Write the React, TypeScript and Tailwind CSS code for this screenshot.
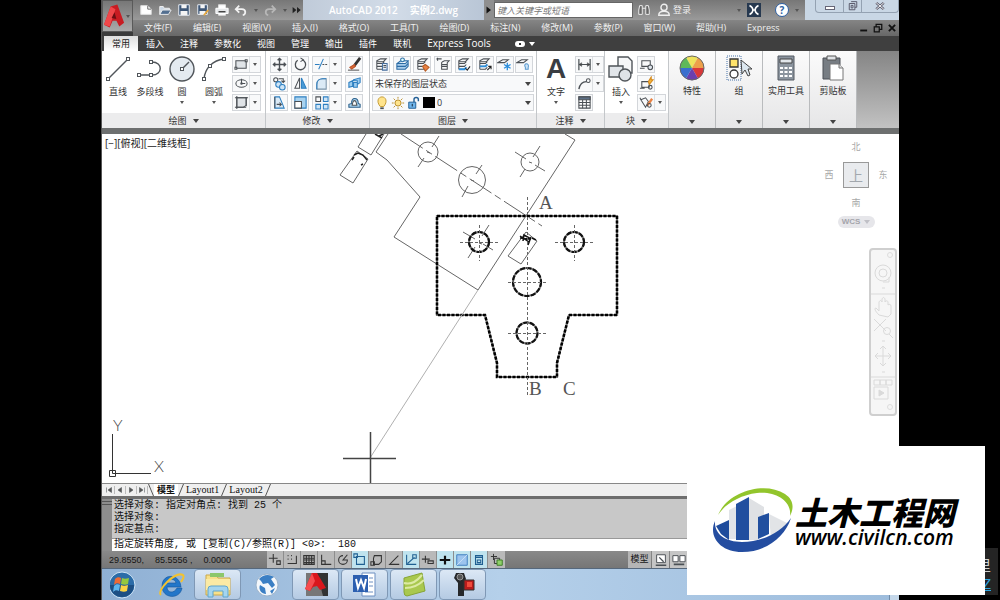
import type { ReactNode } from 'react'

const menus = ['文件(F)', '编辑(E)', '视图(V)', '插入(I)', '格式(O)', '工具(T)', '绘图(D)', '标注(N)', '修改(M)', '参数(P)', '窗口(W)', '帮助(H)', 'Express']
const ribbonTabs = ['常用', '插入', '注释', '参数化', '视图', '管理', '输出', '插件', '联机', 'Express Tools']

function Icon({ children, className = 'size-[15px]' }: { children: ReactNode; className?: string }) {
  return (
    <svg viewBox="0 0 16 16" className={`${className} shrink-0`} fill="none" stroke="#4b5055" strokeWidth="1.1" aria-hidden="true">
      {children}
    </svg>
  )
}

function Caret({ className = 'text-[#444]' }: { className?: string }) {
  return (
    <svg viewBox="0 0 6 4" className={`h-1 w-1.5 shrink-0 ${className}`} aria-hidden="true">
      <path d="M0 0h6L3 4z" fill="currentColor" />
    </svg>
  )
}

function SmallCaret() {
  return (
    <svg viewBox="0 0 4 3" className="h-[3px] w-1 shrink-0" aria-hidden="true">
      <path d="M0 0h4L2 3z" fill="#555" />
    </svg>
  )
}

function SmallButton({ label, arrow, children }: { label: string; arrow?: boolean; children: ReactNode }) {
  return (
    <button aria-label={label} className="flex h-[17px] shrink-0 items-center border border-[#d3d6da] bg-[#f8f9fa]">
      <span className="flex w-4 justify-center">
        <Icon>{children}</Icon>
      </span>
      {arrow && (
        <span className="flex h-full w-[11px] items-center justify-center border-l border-[#dcdfe2]">
          <SmallCaret />
        </span>
      )}
    </button>
  )
}

function BigButton({ label, arrow, children }: { label: string; arrow?: boolean; children: ReactNode }) {
  return (
    <button className="flex w-8 shrink-0 flex-col items-center">
      <svg viewBox="0 0 28 28" className="size-7" fill="none" stroke="#50555a" strokeWidth="1.4" aria-hidden="true">
        {children}
      </svg>
      <span className="mt-[3px] whitespace-nowrap leading-3">{label}</span>
      <span className="mt-[3px]">{arrow && <SmallCaret />}</span>
    </button>
  )
}

function Panel({ title, className, children }: { title: string; className: string; children: ReactNode }) {
  return (
    <section aria-label={title} className={`flex shrink-0 flex-col border-r border-[#c4c7ca] bg-white ${className}`}>
      <div className="flex h-[62px] items-start pt-1">{children}</div>
      <button className="flex h-[15px] items-center justify-center gap-1.5 bg-[#ececed]">
        {title}
        <Caret />
      </button>
    </section>
  )
}

function TallPanel({ title, children }: { title: string; children: ReactNode }) {
  return (
    <button className="flex w-[47px] shrink-0 flex-col items-center border-r border-[#b9bbbd] bg-linear-to-b from-[#fbfbfb] to-[#e6e6e7] pt-[3px]">
      <svg viewBox="0 0 28 28" className="size-7" aria-hidden="true">
        {children}
      </svg>
      <span className="mt-[3px] whitespace-nowrap leading-3">{title}</span>
      <span className="mt-auto pb-1">
        <Caret />
      </span>
    </button>
  )
}

const grip = (x: number, y: number) => <rect x={x - 1.5} y={y - 1.5} width="3" height="3" fill="#fff" strokeWidth="1" />

function DrawPanel() {
  return (
    <Panel title="绘图" className="w-[164px]">
      <BigButton label="直线">
        <path d="M4 24 24 4" />
        {grip(4, 24)}
        {grip(24, 4)}
      </BigButton>
      <BigButton label="多段线">
        <path d="M3 20h13c11 0 11-13 0-13" />
        {grip(3, 20)}
        {grip(15, 20)}
        {grip(15, 7)}
      </BigButton>
      <BigButton label="圆" arrow>
        <circle cx="14" cy="14" r="12" fill="#e4eaf0" />
        <path d="m14 14 7-7" />
        {grip(14, 14)}
      </BigButton>
      <BigButton label="圆弧" arrow>
        <path d="M4 24C5 13 13 5 24 4" />
        {grip(4, 24)}
        {grip(10, 11)}
        {grip(24, 4)}
      </BigButton>
      <div className="ml-0.5 flex flex-col gap-0.5 pt-px">
        <SmallButton label="矩形" arrow>
          <path d="M2 4h11v8H2z" fill="#dfe3e7" />
          <path d="M1 11h2v2H1zM12 3h2v2h-2z" fill="#fff" />
        </SmallButton>
        <SmallButton label="椭圆" arrow>
          <ellipse cx="8" cy="8" rx="6" ry="4" />
          <path d="M8 3v5h4" />
          <circle cx="8" cy="8" r=".8" />
        </SmallButton>
        <SmallButton label="图案填充" arrow>
          <path d="M3 3h10v8l-3 2H3z" fill="#dfe3e7" />
          <path d="M1 3h14M1 13h12M3 1v14M13 2v10" />
        </SmallButton>
      </div>
    </Panel>
  )
}

function ModifyPanel() {
  return (
    <Panel title="修改" className="w-[104px]">
      <div className="grid grid-cols-[18px_18px_30px_18px] gap-x-[3px] gap-y-0.5 pl-1 pt-px">
        <SmallButton label="移动">
          <path d="M8 2v12M2 8h12M6 3.500 8 1.500l2 2M6 12.500l2 2 2-2M3.500 6 1.500 8l2 2M12.500 6l2 2-2 2" strokeWidth="1.5" />
        </SmallButton>
        <SmallButton label="旋转">
          <path d="M5 3.500a5.500 5.500 0 1 0 5-.5" strokeWidth="1.4" />
          <path d="m8 1 3 2-3 2" />
        </SmallButton>
        <SmallButton label="修剪" arrow>
          <path d="M1 8h5" stroke="#2d7fc1" />
          <path d="M9 8h6" strokeDasharray="2 1" />
          <path d="m5 13 5-11" stroke="#2d7fc1" />
        </SmallButton>
        <SmallButton label="删除">
          <path d="m14 1-6 8" stroke="#333" strokeWidth="3" />
          <path d="m8 8-5 3 2 2 4-3z" fill="#e06b35" stroke="#b8532a" />
          <path d="M1 14h12" stroke="#555" />
        </SmallButton>
        <SmallButton label="复制">
          <circle cx="4" cy="4" r="2.200" />
          <path d="M7 3h5v3M10 5l2 2 2-2" />
          <circle cx="7" cy="9" r="3" fill="#cfe5f6" stroke="#2d7fc1" />
          <circle cx="11" cy="12" r="3" fill="#cfe5f6" stroke="#2d7fc1" />
        </SmallButton>
        <SmallButton label="镜像">
          <path d="M7 2v11H2z" />
          <path d="M9 2v11h5z" fill="#4a9bd6" stroke="#2d7fc1" />
        </SmallButton>
        <SmallButton label="圆角" arrow>
          <path d="M3 14V9c0-4 3-6 6-6h4v11z" fill="#dbeaf6" stroke="#7a93a8" />
          <path d="M3 14V9c0-4 3-6 6-6h4" stroke="#2d7fc1" />
        </SmallButton>
        <SmallButton label="分解">
          <path d="m2 7 4-2v6l-4 1zM7 4l7-2v5l-3 2V5H7zM7 7h4v5H7z" fill="#9bcbee" stroke="#2d7fc1" />
        </SmallButton>
        <SmallButton label="拉伸">
          <path d="M3 2h5l5 12H3z" fill="#dbeaf6" stroke="#2d7fc1" />
          <path d="M3 2v12M5 10h5M8 8l2 2-2 2" />
        </SmallButton>
        <SmallButton label="缩放">
          <path d="M2 2h12v12H2z" fill="#a8d2ef" stroke="#2d7fc1" />
          <path d="M2 7h7v7H2z" fill="#fff" />
        </SmallButton>
        <SmallButton label="阵列" arrow>
          <path d="M2 2h5v5H2z" />
          <path d="M10 2h5v5h-5zM10 10h5v5h-5zM2 10h5v5H2z" fill="#cfe5f6" stroke="#2d7fc1" />
        </SmallButton>
        <SmallButton label="偏移">
          <path d="M2 13v-3l3-1c-1-7 7-7 7 0l2 1v3z" fill="#a8d2ef" stroke="#2b5f8a" />
          <path d="M5 11h6c-2-1 0-5-3-5s-1 4-3 5z" fill="#fff" />
        </SmallButton>
      </div>
    </Panel>
  )
}

const sheets = <path d="m3 4 4-2h6l-3 3H3zm0 3h6l2-2M3 10h6l2-2M3 13h6l2-2M3 4v9" />

function LayerPanel() {
  return (
    <Panel title="图层" className="w-[167px]">
      <div className="flex w-full flex-col gap-0.5 px-0.5 pt-px">
        <div className="flex justify-between pr-px">
          <div className="flex gap-[3px]">
            <SmallButton label="图层特性">
              {sheets}
              <path d="M9 7h5v7H9z" fill="#e6eff8" stroke="#466e9d" />
              <path d="M10 9h3M10 11h3" />
            </SmallButton>
            <SmallButton label="将对象的图层设为当前">
              <path d="m2 7 4-3h8l-3 3H2v6h9l3-3V4" fill="#a8cdec" stroke="#2c6ca5" />
              <path d="M2 10h9l3-3" stroke="#2c6ca5" />
              <circle cx="8" cy="3" r="2" fill="#dff" stroke="#2c6ca5" />
            </SmallButton>
          </div>
          <div className="flex gap-[3px]">
            <SmallButton label="匹配">
              {sheets}
              <path d="m8 10 3-2 4 3-4 4z" fill="#e98243" stroke="#b65d26" />
            </SmallButton>
            <SmallButton label="上一个">
              <path d="m7 5 2-1h5l-2 2v7H6V6zM6 8h6M6 10h6M1 2h5M2 1 1 2l1 2" />
            </SmallButton>
          </div>
          <div className="flex gap-[3px]">
            <SmallButton label="隔离">
              {sheets}
              <path d="M3 13h6l2-2" stroke="#2d8fdc" strokeWidth="2" />
              <path d="m10 12 2 2 3-4" stroke="#222" />
            </SmallButton>
            <SmallButton label="取消隔离">
              {sheets}
              <path d="M3 10h6l2-2" stroke="#2d8fdc" strokeWidth="2" />
              <path d="m11 14 4-4M12 10h3v3" stroke="#222" />
            </SmallButton>
          </div>
          <div className="flex gap-px">
            <SmallButton label="冻结">
              <path d="M1 6h7l4-3H6z" />
              <path d="M11 6v8M7.500 8l7 4M14.500 8l-7 4" stroke="#2d8fdc" strokeWidth="1.4" />
            </SmallButton>
            <SmallButton label="关闭">
              <path d="M1 6h7l4-3H6z" />
              <path d="M10 13v-2c-3-5 5-5 3 0v2z" fill="#cde3f5" stroke="#5b9bd0" />
            </SmallButton>
          </div>
        </div>
        <div className="relative h-[17px] border border-[#d3d6da] bg-[#f8f9fa]">
          <select aria-label="图层状态" className="h-full w-full appearance-none bg-transparent pl-0.5 leading-[15px] outline-none">
            <option>未保存的图层状态</option>
          </select>
          <span className="pointer-events-none absolute top-1.5 right-0.5 flex">
            <Caret />
          </span>
        </div>
        <div className="relative flex h-[17px] items-center gap-0.5 border border-[#d3d6da] bg-[#f8f9fa] pl-0.5">
          <Icon className="size-3.5">
            <path d="M6 12C1 6 4 1 8 1s7 5 2 11z" fill="#ffe48c" stroke="#c49a33" />
            <path d="M6 14h4" strokeWidth="2" />
          </Icon>
          <Icon className="size-3.5">
            <circle cx="8" cy="8" r="3.500" fill="#ffe48c" stroke="#b88b25" />
            <path d="M8 1v2M8 13v2M1 8h2M13 8h2M3 3l1.500 1.500M11.500 11.500 13 13M13 3l-1.500 1.500M4.500 11.500 3 13" stroke="#b88b25" />
          </Icon>
          <Icon className="size-3.5">
            <path d="M2 7h8v7H2z" fill="#6fb4ea" stroke="#225f96" />
            <path d="M8 7V4c0-3 5-3 5 0v2" stroke="#225f96" strokeWidth="1.6" />
            <path d="M6 9v3" stroke="#123" />
          </Icon>
          <span className="h-[11px] w-3 bg-black" />
          <select aria-label="图层" className="h-full flex-1 appearance-none bg-transparent leading-[15px] outline-none">
            <option>0</option>
          </select>
          <span className="pointer-events-none absolute top-1.5 right-0.5 flex">
            <Caret />
          </span>
        </div>
      </div>
    </Panel>
  )
}

function NotePanel() {
  return (
    <Panel title="注释" className="w-[68px]">
      <button className="flex w-[38px] shrink-0 flex-col items-center">
        <span className="font-['Liberation_Sans',sans-serif] text-[28px] leading-7 font-bold text-[#3a3d42]">A</span>
        <span className="mt-[3px] leading-3">文字</span>
        <span className="mt-[3px]">
          <SmallCaret />
        </span>
      </button>
      <div className="flex flex-col items-start gap-0.5 pt-px">
        <SmallButton label="线性标注" arrow>
          <path d="M2 2v12M14 2v12M2 8h12" strokeWidth="1.3" />
          <path d="m5 6-3 2 3 2zM11 6l3 2-3 2z" fill="#444" strokeWidth=".5" />
        </SmallButton>
        <SmallButton label="引线" arrow>
          <path d="M2 14C3 9 5 6 10 6" strokeWidth="1.5" />
          <circle cx="12" cy="5" r="2" />
        </SmallButton>
        <SmallButton label="表格">
          <path d="M2 2h12v12H2z" fill="#fff" />
          <path d="M2 2h12v3H2z" fill="#5c6f86" />
          <path d="M2 8h12M2 11h12M6 5v9M10 5v9" />
        </SmallButton>
      </div>
    </Panel>
  )
}

function BlockPanel() {
  return (
    <Panel title="块" className="w-[64px]">
      <BigButton label="插入" arrow>
        <path d="M11 2h10l4 4v12H11z" fill="#f6f7f8" />
        <path d="M2 11h14v11H2z" fill="#e2e6ea" />
        <circle cx="18" cy="20" r="6" fill="#dfe3e8" />
      </BigButton>
      <div className="flex flex-col items-start gap-0.5 pt-px">
        <SmallButton label="创建">
          <path d="M3 4h9v6H3zM1 12h5" />
          <circle cx="12" cy="11" r="2.500" fill="#dfe6ed" />
        </SmallButton>
        <SmallButton label="编辑块">
          <path d="M3 6h8v6H3zM1 13h5" />
          <circle cx="12" cy="12" r="2" />
          <path d="m10 6 3-5v3h2l-4 5z" fill="#f6b73c" stroke="#d58a1d" />
        </SmallButton>
        <SmallButton label="编辑属性" arrow>
          <path d="m2 5 5-2 3 4-3 6zM2 5 1 3" />
          <path d="m9 11 5-7" stroke="#e98243" strokeWidth="2.500" />
          <circle cx="11" cy="11" r="2" />
        </SmallButton>
      </div>
    </Panel>
  )
}

function UtilityPanels() {
  return (
    <>
      <TallPanel title="特性">
        <circle cx="14" cy="14" r="12" fill="#ddd" />
        <path d="M14 14 8 3.600a12 12 0 0 1 12 0z" fill="#eee35c" />
        <path d="M14 14 20 3.600A12 12 0 0 1 26 14z" fill="#eda04a" />
        <path d="M14 14h12a12 12 0 0 1-6 10.400z" fill="#d8383a" />
        <path d="m14 14 6 10.400a12 12 0 0 1-12 0z" fill="#6a3fae" />
        <path d="M14 14 8 24.400A12 12 0 0 1 2 14z" fill="#3a6fce" />
        <path d="M14 14H2A12 12 0 0 1 8 3.600z" fill="#5fb85a" />
        <circle cx="14" cy="14" r="12" fill="none" stroke="#666" />
      </TallPanel>
      <TallPanel title="组">
        <path d="M2 2h14v24H2z" fill="none" stroke="#4673a8" strokeDasharray="1 1" />
        <path d="M5 5h8v8H5z" fill="#ffe36a" stroke="#333" strokeWidth="1.300" />
        <circle cx="9" cy="20" r="4" fill="#fff" stroke="#333" strokeWidth="1.300" />
        <path d="m16 6 1 14 3-4 3 6 2-1-2-6h4z" fill="#dce7ef" stroke="#444" />
      </TallPanel>
      <TallPanel title="实用工具">
        <path d="M6 2h16v24H6z" fill="#8b949e" stroke="#555b62" />
        <path d="M8 5h12v4H8z" fill="#e2e7eb" stroke="#444" />
        <path d="M8 13h3v2H8zm4.500 0h3v2h-3zm4.500 0h3v2h-3zM8 17h3v2H8zm4.500 0h3v2h-3zm4.500 0h3v2h-3zM8 21h3v2H8zm4.500 0h3v2h-3zm4.500 0h3v2h-3z" fill="#fff" />
      </TallPanel>
      <TallPanel title="剪贴板">
        <path d="M4 4h17v21H4z" fill="#777d83" stroke="#4c5157" />
        <path d="M8 2h9v4H8z" fill="#dfe2e5" stroke="#555" />
        <path d="M11 10h9l4 4v12H11z" fill="#fff" stroke="#777" />
        <path d="M20 10v4h4" fill="#ddd" stroke="#777" />
      </TallPanel>
    </>
  )
}

function TitleBar() {
  return (
    <div className="flex h-5 items-center bg-linear-to-b from-[#777] to-[#9a9a9a]">
      <div className="flex h-full w-[170px] shrink-0 items-center gap-[5px] pl-1.5">
        <button aria-label="新建"><Icon className="size-3.5"><path d="M2 3h8l4 4v6H2z" fill="#fff" stroke="#ddd" /><path d="M10 3v4h4" stroke="#666" /></Icon></button>
        <button aria-label="打开"><Icon className="size-3.5"><path d="M2 13V4h4l1 2h6v2" fill="#ccd8e5" stroke="#eee" /><path d="m2 13 3-5h10l-3 5z" fill="#536f90" stroke="#eee" /></Icon></button>
        <button aria-label="保存"><Icon className="size-3.5"><path d="M2 2h12v12H2z" fill="#3e5777" stroke="#e9eef5" /><path d="M5 2h6v4H5zM4 9h8v5H4z" fill="#f4f4f4" stroke="none" /></Icon></button>
        <button aria-label="另存为"><Icon className="size-3.5"><path d="M2 2h11v11H2z" fill="#3e5777" stroke="#e9eef5" /><path d="M5 2h5v4H5zM4 9h7v4H4z" fill="#f4f4f4" stroke="none" /><path d="m9 14 5-6" stroke="#e9a83a" strokeWidth="2" /></Icon></button>
        <button aria-label="打印"><Icon className="size-3.5"><path d="M4 2h8v5H4zM4 11h8v3H4z" fill="#fff" stroke="#ddd" /><path d="M1 6h14v6H1z" fill="#e5e7e9" stroke="#fff" /><path d="M4 10h8" stroke="#333" strokeWidth="1.500" /></Icon></button>
        <button aria-label="放弃" className="flex items-center gap-1.5"><Icon className="size-3.5"><path d="M6 3 2 7l4 4M2 7h7c5 0 5 6 1 7" stroke="#f2f2f2" strokeWidth="2" /></Icon><SmallCaret /></button>
        <button aria-label="重做" className="flex items-center gap-1.5"><Icon className="size-3.5"><path d="m10 3 4 4-4 4M14 7H7c-5 0-5 6-1 7" stroke="#b7b7b7" strokeWidth="2" /></Icon><SmallCaret /></button>
        <Icon className="size-2.5"><path d="m1 3 6 5-6 5zM8 3l6 5-6 5z" fill="#222" stroke="none" /></Icon>
      </div>
      <h1 className="flex h-full flex-1 items-center justify-center gap-3 whitespace-nowrap bg-linear-to-r from-[#c0cbd9] via-[#d2dce8] to-[#b9c6d6] text-[10px] font-semibold text-white">
        <span>AutoCAD 2012</span>
        <span>实例2.dwg</span>
      </h1>
      <button aria-label="展开搜索" className="flex h-full w-2.5 shrink-0 items-center justify-center bg-[#8f8f8f]">
        <Icon className="size-2"><path d="m3 1 9 7-9 7z" fill="#111" stroke="none" /></Icon>
      </button>
      <input
        aria-label="搜索"
        placeholder="键入关键字或短语"
        className="h-4 w-[139px] shrink-0 border border-[#666] bg-white pl-0.5 text-[9px] italic outline-none placeholder:text-[#777]"
      />
      <div className="flex h-full w-[172px] shrink-0 items-center pl-1 text-[9px] text-[#eee]">
        <button aria-label="搜索"><Icon className="size-3.5"><path d="M3 3h3v10H2V8zM10 3h3l1 5v5h-4zM6 6h4" fill="#666" stroke="#eee" /></Icon></button>
        <button className="ml-1.5 flex items-center gap-0.5">
          <Icon className="size-3.5"><circle cx="8" cy="5" r="3.500" stroke="#eee" strokeWidth="1.600" /><path d="M2 14c0-6 12-6 12 0z" stroke="#eee" strokeWidth="1.600" /></Icon>
          登录
        </button>
        <span className="ml-auto flex items-center gap-1.5 pr-1.5">
          <SmallCaret />
          <button aria-label="Exchange" className="flex size-3.5 items-center justify-center bg-[#26384f]"><Icon className="size-3"><path d="M2 2c6 3 6 9 0 12M14 2c-6 3-6 9 0 12M6 8h4" stroke="#fff" strokeWidth="2" /></Icon></button>
          <button aria-label="帮助" className="ml-2 flex size-3.5 items-center justify-center rounded-full border border-[#2d5fa3] bg-white text-[10px] leading-3 font-bold text-[#2d5fa3]">?</button>
          <SmallCaret />
        </span>
      </div>
      <div className="flex h-full w-[94px] shrink-0 bg-[#c9d7e5] pl-2.5">
        <div className="flex h-[13px] flex-1 divide-x divide-[#94a2b2] rounded-b border border-t-0 border-[#94a2b2]">
          <button aria-label="最小化" className="flex w-7 items-end justify-center pb-0.5"><span className="h-1 w-2.5 border border-[#667] bg-white" /></button>
          <button aria-label="还原" className="flex w-[18px] items-center justify-center"><Icon className="size-2.5"><path d="M5 1h9v9h-3M2 4h9v10H2zM5 7h3v4H5z" stroke="#556" strokeWidth="1.500" /></Icon></button>
          <button aria-label="关闭" className="flex flex-1 items-center justify-center"><Icon className="size-2.5"><path d="m2 3 12 10M14 3 2 13" stroke="#556" strokeWidth="4" /><path d="m2 3 12 10M14 3 2 13" stroke="#fff" strokeWidth="1.500" /></Icon></button>
        </div>
      </div>
    </div>
  )
}

function MenuBar() {
  return (
    <nav className="flex h-4 items-center bg-linear-to-b from-[#858585] to-[#686868] pl-[11px] text-[9px] text-[#f0f0f0]">
      <div className="flex gap-[21px] whitespace-nowrap">
        {menus.map((m) => (
          <button key={m} className="leading-4">{m}</button>
        ))}
      </div>
      <div className="ml-auto flex gap-1 pr-0.5">
        <button aria-label="最小化文档"><Icon className="size-2.5"><path d="M2 12h11" stroke="#111" strokeWidth="3" /></Icon></button>
        <button aria-label="还原文档"><Icon className="size-2.5"><path d="M5 5V2h9v8h-4M2 6h8v8H2z" stroke="#111" strokeWidth="2" /></Icon></button>
        <button aria-label="关闭文档"><Icon className="size-2.5"><path d="m3 3 10 10M13 3 3 13" stroke="#111" strokeWidth="3" /></Icon></button>
      </div>
    </nav>
  )
}

function Header() {
  return (
    <header>
      <div className="flex">
        <button aria-label="应用程序菜单" className="flex h-9 w-[31px] shrink-0 items-center bg-[#3b3b3b] pb-1">
          <span className="flex h-8 w-full items-center border border-[#5a5a5a] bg-linear-to-b from-[#777] to-[#aaa]">
            <svg viewBox="0 0 24 28" className="h-7 w-[23px]" aria-hidden="true">
              <path d="M1 23 8 4l7-2 7 19-5 4-3-6h-4l-3 7z" fill="#c81c22" />
              <path d="M1 23 8 4l5 3-6 18z" fill="#f0474a" />
              <path d="m9 16 3-6 2 7z" fill="#6c0f13" />
            </svg>
            <SmallCaret />
          </span>
        </button>
        <div className="min-w-0 flex-1">
          <TitleBar />
          <MenuBar />
        </div>
      </div>
      <div className="flex h-[15px] items-center bg-[#3f3f3f] pl-0.5 text-[9px] text-white">
        {ribbonTabs.map((t, i) => (
          <button
            key={t}
            className={i === 0 ? 'h-full bg-linear-to-b from-[#dedede] to-white px-2 text-[#222]' : i === 9 ? 'px-2 text-[10px]' : 'px-2'}
          >
            {t}
          </button>
        ))}
        <button aria-label="最小化功能区" className="ml-4 flex items-center gap-1">
          <span className="flex h-1.5 w-2.5 items-center justify-center rounded-sm bg-white"><span className="size-0.5 bg-[#333]" /></span>
          <Caret className="text-white" />
        </button>
      </div>
      <div className="flex h-[77px] overflow-hidden bg-linear-to-r from-[#888] to-[#b0b0b0] text-[9px] text-[#333]">
        <DrawPanel />
        <ModifyPanel />
        <LayerPanel />
        <NotePanel />
        <BlockPanel />
        <UtilityPanels />
        <div className="flex-1 bg-linear-to-b from-[#858585] to-[#c2c2c2]" />
      </div>
    </header>
  )
}

function Drawing() {
  const plate = 'M437 216h180v99h-48l-12 48v14h-60v-14l-12-48h-48z'
  const holes = [
    { x: 479, y: 242, r: 10 },
    { x: 574, y: 242, r: 10 },
    { x: 527, y: 282, r: 14 },
    { x: 527, y: 333, r: 10.5 },
  ]
  return (
    <svg viewBox="102 134 797 349" preserveAspectRatio="xMinYMin meet" className="h-[349px] w-full" fill="none" stroke="#666" role="img" aria-label="图形">
      {/* rotated preview */}
      <path d="m565 134 10 6-97 150-84-53 26-40-33-37-11-8 12-18" />
      <path d="m401 134 141 92" strokeDasharray="26 4 7 4" />
      <g>
        <circle cx="428" cy="152" r="10" />
        <circle cx="472" cy="180" r="13.500" />
        <circle cx="530" cy="162" r="9" />
        <path d="m439 136-7 11m-8 11-6 9M482 165l-6 9m-8 12-6 11M540 146l-7 11m-8 12-5 8M515 152l11 7m9 6 10 6M489 225l-7 11m-7 11-7 11M463 232l12 7m8 5 10 6" />
        <path d="m427 152 3 1m41 27 3 1m55-19 3 1m-53 80 3 1" />
      </g>
      <path d="m357 151 11 8-15 24-13-8zM366 134l-8 13 13 8 13-21M526 232l11 9-16 23-13-8z" fill="#fff" />
      <path d="m354 155 4-2 5 2 4 5m-13-3-2 3m9 5 2-1m12-30 7 4m-3-2 4-2" stroke="#222" strokeWidth="1.500" />
      <path d="m520 238 11 1-7-4-1 6m8-4-3 8m4-7 4 2m-16-4 9 6" stroke="#111" strokeWidth="1.500" />

      {/* selected part */}
      <path d={plate} stroke="#777" strokeWidth="2.200" />
      <path d={plate} stroke="#000" strokeWidth="2.500" strokeDasharray="3 1.500" />
      {holes.map((h) => (
        <g key={`${h.x}-${h.y}`}>
          <circle cx={h.x} cy={h.y} r={h.r} stroke="#777" strokeWidth="1.800" />
          <circle cx={h.x} cy={h.y} r={h.r} stroke="#111" strokeWidth="2.200" strokeDasharray="5 1.500" />
          <path d={`M${h.x - 19} ${h.y}.5h40`} strokeDasharray="3 2" />
        </g>
      ))}
      <path d="M479.500 225v36M574.500 225v36M527.500 197v198" strokeDasharray="3 2" />
      <path d="M478 290 370 458" stroke="#b0b0b0" />

      {/* crosshair */}
      <path d="M370.500 432v51M343 458.500h53" stroke="#444" strokeWidth="1.500" />

      {/* ucs icon */}
      <path d="M112.500 434v39.500H151M109.500 470.500h6v6h-6z" stroke="#333" />
      <g fill="#555" stroke="none" className="font-['Liberation_Serif',serif] text-[19px]">
        <text x="539" y="209">A</text>
        <text x="529" y="395">B</text>
        <text x="563" y="395">C</text>
      </g>
      <g fill="#444" stroke="none" className="font-['Lato',sans-serif] text-[16px] font-light">
        <text x="113" y="431">Y</text>
        <text x="154" y="472">X</text>
      </g>
    </svg>
  )
}

function ViewCube() {
  return (
    <div className="absolute top-1.5 right-2 flex flex-col items-center text-[9px] text-[#a8a8a8]">
      <div className="grid grid-cols-[16px_38px_16px] grid-rows-[14px_42px_14px] place-items-center rounded-full">
        <button className="col-start-2">北</button>
        <button className="col-start-1">西</button>
        <button className="flex size-[26px] items-center justify-center border border-[#999] bg-[#e9ebee] text-[14px] text-[#a2a7ad]">上</button>
        <button>东</button>
        <button className="col-start-2">南</button>
      </div>
      <button className="mt-1.5 flex h-3 w-[37px] items-center justify-center gap-1 rounded-md bg-[#e6e6ea] font-['Liberation_Sans',sans-serif] text-[8px] font-bold text-[#a4a4aa]">
        WCS <Caret className="text-[#c0c0c6]" />
      </button>
    </div>
  )
}

function NavigationBar() {
  return (
    <div className="absolute top-[114px] right-0.5 flex h-[168px] w-7 flex-col items-center rounded-sm border-2 border-[#cfcfcf] bg-[#f6f6f6]">
      <span className="mt-0.5 mr-0.5 size-1.5 self-end rounded-full border border-[#ddd]" />
      <svg viewBox="0 0 24 146" className="h-[146px] w-6" fill="none" stroke="#dadada" strokeWidth="1" aria-hidden="true">
        <circle cx="12" cy="15" r="8" />
        <circle cx="12" cy="15" r="4" />
        <path d="M18 19v5h-6M11 30h3M0 36h24" />
        <path d="M8 57c-4-4-5-7-3-7l3 3v-9c1-2 2-2 3 0v-3c1-2 2-2 3 0v3c1-2 3-1 3 0v3c1-1 3-1 3 1v8l-3 3z" />
        <path d="m3 61 12 12M15 61 3 73" />
        <circle cx="16" cy="73" r="3.500" />
        <path d="m18 76 4 4M11 83h3" />
        <path d="M12 88v20M4 98h16M9 91l3-3 3 3M9 105l3 3 3-3M7 95l-3 3 3 3M17 95l3 3-3 3M11 114h3M0 119h24" />
        <path d="M3 122h6v5H3zM9 122h6v5H9zM15 122h6v5h-6zM3 129h14v12H3z" />
        <path d="m8 132 5 3-5 3z" fill="#dadada" />
      </svg>
      <span className="mr-0.5 size-1.5 self-end rounded-full border border-[#ddd]" />
    </div>
  )
}

function LayoutTabs() {
  const slash = (
    <svg viewBox="0 0 6 12" className="h-3 w-1.5" stroke="#555" aria-hidden="true"><path d="M.5 12 5.500 0" /></svg>
  )
  return (
    <div className="flex h-[13px] items-center border-t border-[#888] bg-[#efefef] pl-0.5 font-['Liberation_Serif','Noto_Sans_CJK_SC',serif] text-[10px] text-[#111]">
      {['M3 3v10M13 3 6 8l7 5z', 'm11 3-7 5 7 5z', 'm5 3 7 5-7 5z', 'M13 3v10M3 3l7 5-7 5z'].map((d) => (
        <button key={d} aria-label="翻页" className="flex w-[11px] justify-center border-r border-[#bbb]">
          <Icon className="size-2"><path d={d} fill="#555" /></Icon>
        </button>
      ))}
      <svg viewBox="0 0 6 12" className="h-3 w-1.5" stroke="#555" aria-hidden="true"><path d="m.5 0 5 12" /></svg>
      <button className="h-full bg-white px-[3px] text-[9px] leading-3 font-bold">模型</button>
      {slash}
      <button className="px-0.5 leading-3 font-medium">Layout1</button>
      {slash}
      <button className="px-0.5 leading-3 font-medium">Layout2</button>
      {slash}
    </div>
  )
}

function CommandLine() {
  return (
    <div className="flex border-t-3 border-[#6e6e6e] bg-[#8d8d8d] font-['Liberation_Mono','Noto_Sans_CJK_SC',monospace] text-[10px] text-[#111]">
      <div className="w-2.5 shrink-0 pt-0.5">
        <div className="h-1 border-y border-[#555]" />
      </div>
      <div className="flex-1">
        <div className="h-10 border-b border-[#999] bg-[#c8c8c8] pt-px pl-0.5 leading-3 whitespace-pre">
          <p>选择对象: 指定对角点: 找到 25 个</p>
          <p>选择对象:</p>
          <p>指定基点:</p>
        </div>
        <div className="flex h-3 items-center bg-white pl-0.5 leading-3 whitespace-pre">
          <label htmlFor="command">{'指定旋转角度, 或 [复制(C)/参照(R)] <0>:  '}</label>
          <input id="command" defaultValue="180" className="h-3 min-w-0 flex-1 leading-3 outline-none" />
        </div>
      </div>
    </div>
  )
}

const toggles = [
  { label: '推断约束', d: 'M6 1v10M1 6h10M10 9h4v4h-4z' },
  { label: '捕捉', d: 'M3 3h1M7 3h1M3 7h1M7 7h1M3 12h10V3' },
  { label: '栅格', d: 'M2 3h12v10H2zM2 6h12M2 8h12M2 11h12M5 3v10M8 3v10M11 3v10' },
  { label: '正交', d: 'M3 2v11h11M3 9h4v4' },
  { label: '极轴', d: 'M8 3a5 5 0 1 0 5 5H8l5-6' },
  { label: '对象捕捉', d: 'M4 4h9v9H4zM1 1h4v4H1z', on: true },
  { label: '三维对象捕捉', d: 'M5 3h8v7l-3 3H4V6zM1 10h4v4H1z' },
  { label: '对象追踪', d: 'M13 3 3 13h11' },
  { label: '动态 UCS', d: 'M3 2v11h11M4 12l8-7M10 2h4v4h-4z', on: true },
  { label: '动态输入', d: 'M5 3v8M1 7h9M8 9h6v3H8z' },
  { label: '线宽', d: 'M8 3v10M2 8h12', on: true },
  { label: '透明度', d: 'M2 2h12v12H2zM2 6l4-4M2 10l8-8M2 14 14 2M6 14l8-8M10 14l4-4', on: true },
  { label: '快捷特性', d: 'M4 3h8v10H4zM4 5h8M6 8h4v3H6z', on: true },
]

function StatusBar() {
  return (
    <div className="flex h-[17px] bg-linear-to-b from-[#898989] to-[#767676] font-['Liberation_Sans','Noto_Sans_CJK_SC',sans-serif] text-[9px] text-[#151515]">
      <div className="flex w-[165px] shrink-0 items-center gap-[11px] pt-0.5 pl-[7px] whitespace-nowrap">
        <span>29.8550,</span>
        <span>85.5556 ,</span>
        <span>0.0000</span>
      </div>
      {toggles.map((t) => (
        <button
          key={t.label}
          aria-label={t.label}
          className={`flex w-[17px] shrink-0 items-center justify-center border-r border-[#8d8d8d] ${t.on ? 'bg-[#bfe3ee]' : 'bg-[#b9b9b9]'}`}
        >
          <Icon className="size-3.5">
            {t.label === '透明度' ? (
              <>
                <path d="M2 2h12v12H2z" fill="#9cc4ee" stroke="#3f7fc0" />
                <path d="M2 14 14 2" stroke="#c9dff5" />
              </>
            ) : (
              <path
                d={t.d}
                stroke={t.label === '线宽' ? '#111' : t.on ? '#1f5f91' : '#333'}
                strokeWidth={t.label === '线宽' ? 2.5 : 1.2}
              />
            )}
          </Icon>
        </button>
      ))}
      <button aria-label="选择循环" className="flex w-[17px] shrink-0 items-center justify-center bg-[#b9b9b9]">
        <Icon className="size-3.5">
          <path d="M4 1v7M1 4h7M5 6h6v6H5z" stroke="#333" />
          <path d="M8 8h6v6H8z" fill="#8fd06a" stroke="#3f7d28" />
        </Icon>
      </button>
      <div className="ml-auto flex w-[271px] gap-px">
        <button className="w-[23px] bg-[#b5b5b5]">模型</button>
        <button aria-label="快速查看布局" className="flex w-[17px] items-center justify-center bg-[#c5c5c5]"><Icon className="size-3.5"><path d="M3 2h10v9H3z" fill="#fff" /><path d="m6 5 5 5M2 14h12" strokeWidth="1.500" /></Icon></button>
        <button aria-label="快速查看图形" className="flex w-[17px] items-center justify-center bg-[#c5c5c5]"><Icon className="size-3.5"><path d="M1 3h6v7H1zM9 3h6v7H9z" fill="#fff" /><path d="M2 13h12" strokeWidth="2" /></Icon></button>
      </div>
    </div>
  )
}

function TaskButton({ label, open, children }: { label: string; open?: boolean; children: ReactNode }) {
  return (
    <button
      aria-label={label}
      className={`flex h-[31px] w-[47px] shrink-0 items-center justify-center rounded-sm border ${open ? 'border-[#7f98b5] bg-linear-to-b from-[#dce8f5] to-[#b4cae3]' : 'border-transparent'}`}
    >
      <svg viewBox="0 0 32 28" className="h-7 w-8" aria-hidden="true">{children}</svg>
    </button>
  )
}

function Taskbar() {
  return (
    <footer className="flex h-8 items-center gap-0.5 border-t border-[#56687c] bg-linear-to-r from-[#8fb0d4] via-[#b5d0ea] to-[#9dbcdc]">
      <div className="-mr-1 flex">
        <TaskButton label="开始">
          <circle cx="12" cy="14" r="13" fill="#2b6ca8" stroke="#d3e6f6" />
          <path d="M0 14a12 12 0 0 0 24 0z" fill="#1c4f84" />
          <path d="M5 8c2-2 4-2 6-1l-1 6c-2-1-4-1-6 1z" fill="#ee6a35" />
          <path d="M12 7c2 1 4 1 7 0l-1 6c-2 1-4 1-7 0z" fill="#95c83d" />
          <path d="M4 15c2-2 4-2 6-1l-1 6c-2-1-4-1-6 1z" fill="#5db5ee" />
          <path d="M11 14c2 1 4 1 7 0l-1 6c-2 1-4 1-7 0z" fill="#fbd343" />
        </TaskButton>
        <TaskButton label="Internet Explorer">
          <path d="M22 17h5c-2 12-20 11-20-2S25 2 26 16H12c0 6 7 7 10 1zM12 12h9c-1-5-8-5-9 0z" fill="#2276c9" stroke="#14559b" strokeWidth=".6" transform="translate(-2)" />
          <path d="M4 24C-1 20 18 0 26 4c2 2-1 5-2 7" fill="none" stroke="#f2c230" strokeWidth="2" />
        </TaskButton>
      </div>
      <TaskButton label="资源管理器" open>
        <path d="M4 4h10l2 3h12v17H4z" fill="#f7e08a" stroke="#cba84a" />
        <path d="M8 2h14v4H8z" fill="#8cc76b" />
        <path d="M4 8h24v11H4z" fill="#fbeaa4" />
        <path d="M6 26v-8q0-3 3-3h14q3 0 3 3v8h-5v-6H11v6z" fill="#a4d5ef" stroke="#5fa5cd" />
      </TaskButton>
      <TaskButton label="浏览器">
        <circle cx="16" cy="14" r="11" fill="#f3f7fb" stroke="#9db3ca" />
        <path d="M8 8c4-5 11-5 15-2l-3 2 4 6-3 3-4-5-5 1-2-3zM9 14l5 3 1 6c-4 0-8-4-6-9zm10 6 5-3-3 6z" fill="#3b7fc4" />
      </TaskButton>
      <TaskButton label="AutoCAD" open>
        <path d="M6 2h22v23H6z" fill="#777" />
        <path d="m17 2 11 0v23h-5z" fill="#333" />
        <path d="M5 18 12 2h5l9 15-6 2-3-4-4 1-3 4z" fill="#d9161c" />
        <path d="m5 18 7-16 3 8-5 10z" fill="#f54c4f" />
      </TaskButton>
      <TaskButton label="Word" open>
        <path d="M13 2h13v23H13z" fill="#fff" stroke="#6d8fc1" />
        <path d="M20 7h4M20 11h4M20 15h4M16 21h8" stroke="#6d8fc1" />
        <path d="M4 4h15v17H4z" fill="#2c5fb0" />
        <path d="m7 8 2 9 3-8 3 8 2-9" fill="none" stroke="#fff" strokeWidth="2" />
      </TaskButton>
      <TaskButton label="Camtasia" open>
        <path d="M6 7 24 2l3 18-18 5q-3 0-3-4z" fill="#a9c84e" stroke="#86a536" />
        <path d="M6 12c8 2 13-2 18-8M7 17c9 0 15-4 19-8" fill="none" stroke="#dceaa4" strokeWidth="2" />
      </TaskButton>
      <TaskButton label="录像机" open>
        <path d="M9 2h8l2 6-2 4v13h-6V12L7 7z" fill="#26282b" />
        <circle cx="13" cy="6" r="3" fill="#555" stroke="#999" />
        <path d="M17 9h10v10H17z" fill="#b91c1c" stroke="#333" />
        <path d="M20 11h5v5h-5z" fill="#f04b3c" />
      </TaskButton>
      <button aria-label="显示桌面" className="ml-auto h-full w-2.5 border-l border-[#6e8aa8] bg-[#c5d8ea]" />
    </footer>
  )
}

function Watermark() {
  return (
    <aside className="absolute right-[15px] bottom-[5px] flex h-[149px] w-[298px] items-center bg-white pl-6 text-black">
      <svg viewBox="0 0 84 68" className="h-[68px] w-[84px] shrink-0" aria-hidden="true">
        <path d="m38 11 15 9v11l-6 3v19h-9z" fill="#dfe1e4" />
        <path d="m58 27 20 10-18 16z" fill="#e2e4e7" />
        <path d="m5 39 13-6v20l-8-6z" fill="#1e4b9c" />
        <path d="m18 23 8-4v33h-8z" fill="#e1e4e8" />
        <path d="m25 17 13-7v43H25z" fill="#214f9f" />
        <path d="m47 30 11-4v21l-11 5z" fill="#214f9f" />
        <path d="M7 28C17 4 54-6 74 7c9 6 9 14 5 22C81 14 65 4 46 6 29 8 14 17 7 28z" fill="#92c52c" />
        <path d="M4 34C-3 49 9 65 31 65c24 0 43-15 49-34C70 46 50 55 31 55 14 55 3 47 4 34z" fill="#244da0" />
      </svg>
      <div className="whitespace-nowrap italic">
        <p className="font-['Noto_Sans_CJK_SC',sans-serif] text-[32px] leading-8 font-black">土木工程网</p>
        <p className="font-['Open_Sans',sans-serif] text-[21px] leading-5 font-semibold">www.civilcn.com</p>
      </div>
    </aside>
  )
}

export default function App() {
  return (
    <div className="relative min-h-screen overflow-hidden bg-black px-[10.1%] font-['Open_Sans','Noto_Sans_CJK_SC',sans-serif]">
      <main className="flex min-h-screen flex-col border-l border-[#555] bg-white">
        <Header />
        <div className="relative flex-1 border-t-6 border-[#6d6f6f]">
          <Drawing />
          <p className="absolute top-[3px] left-[3px] text-[10px] leading-3 text-[#222]">[−][俯视][二维线框]</p>
          <ViewCube />
          <NavigationBar />
        </div>
        <LayoutTabs />
        <CommandLine />
        <StatusBar />
        <Taskbar />
      </main>
      <div className="absolute right-0.5 bottom-[5px] flex h-[47px] w-10 flex-col items-end bg-[#242424] pt-2 pr-[7px] text-[15px] leading-[18px]">
        <span className="text-[#d0d0d0]">里</span>
        <a href="#" className="text-[#2ba3e0] underline">Z</a>
      </div>
      <Watermark />
    </div>
  )
}
